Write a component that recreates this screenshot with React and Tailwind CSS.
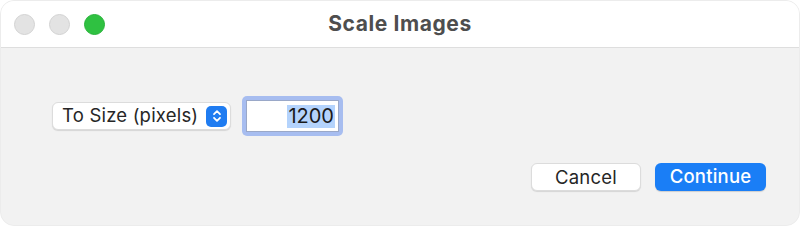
export default function App() {
  return (
    <div className="w-[800px] h-[226px] bg-white" style={{ fontFamily: "Inter, 'Liberation Sans', sans-serif" }}>
      <div className="w-full h-full rounded-[14px] border border-[#ececec] overflow-hidden flex flex-col bg-[#f2f2f2]">
        {/* Title bar */}
        <div className="h-[47px] bg-white border-b border-[#dedede] flex items-center relative shrink-0">
          <div className="flex items-center gap-[14px] pl-[13px]">
            <span className="w-[21px] h-[21px] rounded-full bg-[#e3e3e3] border border-[#d2d2d2]" />
            <span className="w-[21px] h-[21px] rounded-full bg-[#e3e3e3] border border-[#d2d2d2]" />
            <span className="w-[21px] h-[21px] rounded-full bg-[#2fc141] border border-[#28b23a]" />
          </div>
          <div className="absolute inset-0 flex items-center justify-center pointer-events-none">
            <span className="text-[21px] font-bold text-[#4e4e4e] tracking-[0.6px]">Scale Images</span>
          </div>
        </div>

        {/* Body */}
        <div className="flex-1 flex flex-col px-[33px]">
          <div className="flex items-center mt-[48px] pl-[18px]">
            <div className="w-[179px] h-[28px] bg-white rounded-[6px] border border-[#dcdcdc] shadow-[0_1px_1px_rgba(0,0,0,0.12)] flex items-center justify-between pl-[9px] pr-[3px]">
              <span className="text-[18.5px] text-[#262626] tracking-[0.2px]">To Size (pixels)</span>
              <span className="w-[21px] h-[21px] rounded-[5px] bg-[#1f7cf1] flex items-center justify-center">
                <svg width="10" height="14" viewBox="0 0 10 14" fill="none" stroke="white" strokeWidth="1.8" strokeLinecap="round" strokeLinejoin="round">
                  <path d="M2 5.2 L5 2.2 L8 5.2" />
                  <path d="M2 8.8 L5 11.8 L8 8.8" />
                </svg>
              </span>
            </div>
            <div className="ml-[11px] w-[101px] h-[40px] rounded-[5px] bg-[#a7bdf0] p-[4px] flex">
              <div className="flex-1 bg-white border border-[#9aa8c8] flex items-center justify-end pr-[3px]">
                <span className="text-[20px] text-[#1a1a1a] bg-[#b4d3fc] px-[1px] leading-[23px]">1200</span>
              </div>
            </div>
          </div>

          <div className="flex justify-end gap-[14px] mt-[27px]">
            <button className="w-[110px] h-[28px] bg-white rounded-[6px] border border-[#dcdcdc] shadow-[0_1px_1px_rgba(0,0,0,0.12)] text-[18.5px] text-[#262626] tracking-[0.2px]">
              Cancel
            </button>
            <button className="w-[111px] h-[28px] bg-[#1a7ef6] rounded-[6px] shadow-[0_1px_1px_rgba(0,0,0,0.15)] text-[18.5px] font-medium text-white tracking-[0.2px]">
              Continue
            </button>
          </div>
        </div>
      </div>
    </div>
  );
}
